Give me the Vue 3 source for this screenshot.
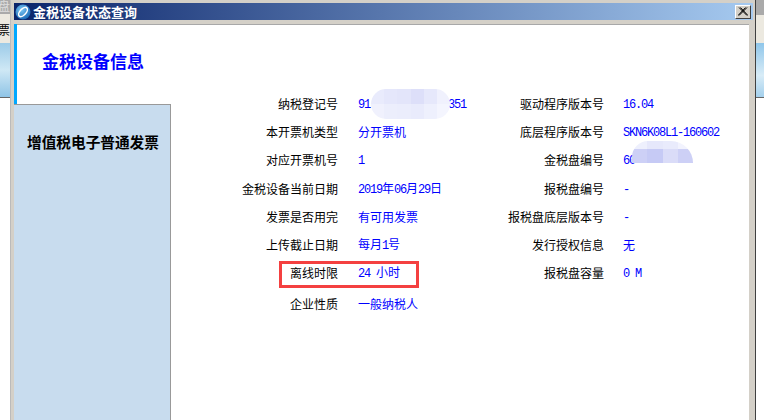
<template>
  <div class="desk">
    <div class="desk-left">
      <div class="dl-top">盘</div>
      <div class="dl-mid">票</div>
      <div class="dl-blue"></div>
    </div>
    <div class="desk-right">
      <div class="dr-top"></div>
      <div class="dr-mid"></div>
      <div class="dr-blue"></div>
    </div>

    <div class="win">
      <div class="titlebar">
        <svg class="app-icon" width="16" height="16" viewBox="0 0 16 16">
          <defs>
            <radialGradient id="ball" cx="0.4" cy="0.35" r="0.75">
              <stop offset="0" stop-color="#7cc8f4" />
              <stop offset="1" stop-color="#0f5fb0" />
            </radialGradient>
          </defs>
          <circle cx="8" cy="8" r="7.5" fill="url(#ball)" />
          <ellipse cx="8" cy="8" rx="5.6" ry="3" transform="rotate(-48 8 8)" fill="none" stroke="#fff" stroke-width="1.5" />
        </svg>
        <span class="title-text">金税设备状态查询</span>
        <button class="close-btn">
          <svg width="10" height="9" viewBox="0 0 10 9">
            <path d="M1 0.5 9 8.5M2.4 0.5 10 8.5M9 0.5 1 8.5M7.6 0.5 0 8.5" stroke="#000" stroke-width="1" fill="none" />
          </svg>
        </button>
      </div>
      <div class="body">
        <div class="side">
          <div class="side-head">
            <h1>金税设备信息</h1>
          </div>
          <div class="side-tab">增值税电子普通发票</div>
        </div>
        <div class="info">
          <div class="grid">
            <template v-for="(r, i) in rows" :key="i">
              <div class="lab">{{ r.l1 }}</div>
              <div class="val">
                <span v-for="(p, j) in runs(r.v1)" :key="j" :class="{ lat: p.lat }">{{ p.t }}</span>
                <div v-if="r.blur1" class="blob blob-a">
                  <i v-for="c in blobA" :key="c.k" :style="{ background: c.c }"></i>
                </div>
              </div>
              <div class="lab">{{ r.l2 }}</div>
              <div class="val">
                <span v-for="(p, j) in runs(r.v2)" :key="j" :class="{ lat: p.lat }">{{ p.t }}</span>
                <div v-if="r.blur2" class="blob blob-b">
                  <i v-for="c in blobB" :key="c.k" :style="{ background: c.c }"></i>
                </div>
              </div>
            </template>
          </div>
          <div class="redbox"></div>
        </div>
      </div>
    </div>
  </div>
</template>

<script setup>
const rows = [
  { l1: '纳税登记号', v1: '91             351', blur1: true, l2: '驱动程序版本号', v2: '16.04' },
  { l1: '本开票机类型', v1: '分开票机', l2: '底层程序版本号', v2: 'SKN6K08L1-160602' },
  { l1: '对应开票机号', v1: '1', l2: '金税盘编号', v2: '60', blur2: true },
  { l1: '金税设备当前日期', v1: '2019年06月29日', l2: '报税盘编号', v2: '-' },
  { l1: '发票是否用完', v1: '有可用发票', l2: '报税盘底层版本号', v2: '-' },
  { l1: '上传截止日期', v1: '每月1号', l2: '发行授权信息', v2: '无' },
  { l1: '离线时限', v1: '24 小时', l2: '报税盘容量', v2: '0 M' },
  { l1: '企业性质', v1: '一般纳税人', l2: '', v2: '' }
]

// latin runs are half width in the reference, cjk runs full width
const runs = (text) =>
  (text.match(/[\x00-\x7f]+|[^\x00-\x7f]+/g) || []).map((t) => ({
    t,
    lat: /^[\x00-\x7f]/.test(t)
  }))

const toCells = (list) => list.map((c, k) => ({ c, k }))

const blobA = toCells([
  '#e9ebfc', '#e5e7fb', '#e3e5fa', '#dddff9', '#e6e8fb', '#f0f1fd',
  '#f0f1fd', '#eceefc', '#ebedfc', '#e9ebfc', '#eef0fd', '#f4f5fe'
])
const blobB = toCells([
  '#eef0fd', '#e6e8fb', '#e9ebfc', '#f2f3fe',
  '#cdd0f6', '#c6caf5', '#dadcf8', '#cdd0f6'
])
</script>

<style>
html, body {
  margin: 0;
  background: #fff;
}
</style>

<style scoped>
.desk {
  position: relative;
  width: 764px;
  height: 420px;
  overflow: hidden;
  background: #fff;
  font-family: "Noto Sans CJK SC", "Liberation Sans", sans-serif;
  font-size: 12px;
}

.desk-left {
  position: absolute;
  left: 0;
  top: 0;
  width: 10px;
  display: flex;
  flex-direction: column;
}

.dl-top {
  height: 14px;
  background: #aaa;
  color: #ddd;
  overflow: hidden;
  line-height: 12px;
  direction: rtl;
}

.dl-mid {
  height: 29px;
  background: #ece9e0;
  overflow: hidden;
  line-height: 32px;
  direction: rtl;
  color: #000;
}

.dl-blue {
  height: 54px;
  background: linear-gradient(#9ccbe8, #cfe8f5 50%, #8fc4e6);
  border-bottom: 1px solid #666;
}

.desk-right {
  position: absolute;
  right: 0;
  top: 0;
  width: 8px;
}

.dr-top {
  height: 15px;
  background: #aaa;
}

.dr-mid {
  height: 28px;
  background: #ece9e0;
}

.dr-blue {
  height: 54px;
  background: linear-gradient(#8fc6ea, #d8ecf7 60%, #a4d0ec);
  border-bottom: 1px solid #666;
}

.win {
  position: absolute;
  left: 10px;
  top: 0;
  width: 746px;
  height: 420px;
  box-sizing: border-box;
  background: #d4d0c8;
  padding: 3px 2px 0 3px;
  border-left: 1px solid #bbb;
  border-right: 1px solid #404040;
  display: flex;
  flex-direction: column;
}

.titlebar {
  height: 17px;
  flex: none;
  display: flex;
  align-items: center;
  background: linear-gradient(90deg, #0a246a, #a6caf0);
  color: #fff;
  padding: 0 2px 0 1px;
}

.app-icon {
  flex: none;
}

.title-text {
  margin-left: 2px;
  font-size: 13px;
  font-weight: 700;
}

.close-btn {
  margin-left: auto;
  width: 16px;
  height: 14px;
  padding: 0;
  background: #d4d0c8;
  border: 1px solid;
  border-color: #fff #404040 #404040 #fff;
  display: flex;
  align-items: center;
  justify-content: center;
}

.body {
  flex: 1;
  margin: 4px 4px 0 0;
  background: #fff;
  box-shadow: inset 0 1px #a8a8a8;
  display: flex;
  min-height: 0;
}

.side {
  width: 157px;
  flex: none;
  display: flex;
  flex-direction: column;
}

.side-head {
  height: 80px;
  box-sizing: border-box;
  border-left: 3px solid #00a8ff;
  display: flex;
  align-items: center;
  padding: 0 0 8px 25px;
}

.side-head h1 {
  margin: 0;
  font-size: 17px;
  font-weight: 700;
  color: #00f;
}

.side-tab {
  flex: 1;
  box-sizing: border-box;
  background: #c8dcee;
  border-top: 1px solid #999;
  border-right: 1px solid #999;
  padding-top: 27px;
  padding-left: 13px;
  font-size: 14.67px;
  line-height: 20px;
  font-weight: 700;
  color: #000;
  white-space: nowrap;
}

.info {
  position: relative;
  flex: 1;
  padding-top: 66px;
}

.grid {
  display: grid;
  grid-template-columns: 167px 120px 106px 1fr;
  grid-template-rows: repeat(7, 28.2px) 33px;
  column-gap: 20px;
  align-items: center;
}

.lab {
  text-align: right;
  color: #000;
  white-space: nowrap;
  line-height: 16px;
}

.val {
  position: relative;
  color: #00f;
  white-space: pre;
  line-height: 16px;
}

.val:nth-child(4n) {
  margin-left: -1px;
}

.lat {
  font-family: "Liberation Mono", monospace;
  font-size: 12px;
  letter-spacing: -1.2px;
}

.blob {
  position: absolute;
  display: grid;
  overflow: hidden;
}

.blob i {
  display: block;
}

.blob-a {
  left: 13px;
  top: -6px;
  width: 79px;
  height: 30px;
  border-radius: 15px;
  grid-template-columns: repeat(6, 1fr);
  grid-template-rows: 1fr 1fr;
}

.blob-b {
  left: 9px;
  top: -10px;
  width: 61px;
  height: 22px;
  border-radius: 16px 22px 0 0;
  grid-template-columns: repeat(4, 1fr);
  grid-template-rows: 8px 1fr;
}

.redbox {
  position: absolute;
  left: 108px;
  top: 237px;
  width: 134px;
  height: 21px;
  border: 3px solid #f44040;
  pointer-events: none;
}
</style>
